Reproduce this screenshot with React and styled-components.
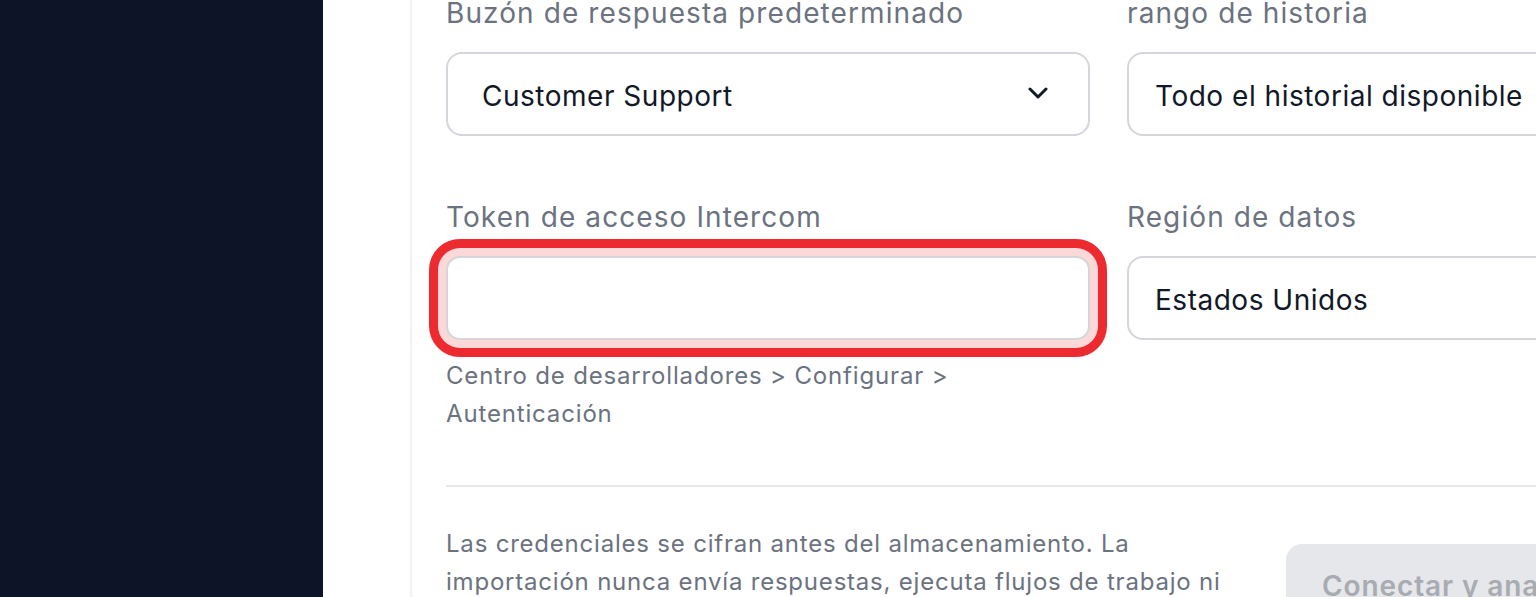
import React from "react";
import styled, { createGlobalStyle } from "styled-components";

const GlobalStyle = createGlobalStyle`
  html, body {
    margin: 0;
    padding: 0;
    background: #ffffff;
    overflow: hidden;
  }
  body {
    font-family: Inter, "Noto Sans", "Liberation Sans", sans-serif;
    letter-spacing: 0.032em;
  }
  * {
    box-sizing: border-box;
  }
`;

const Shell = styled.div`
  display: flex;
  width: 1536px;
  height: 597px;
  overflow: hidden;
`;

const Sidebar = styled.aside`
  width: 323px;
  flex-shrink: 0;
  background: #0e1427;
`;

const Main = styled.main`
  flex: 1;
  display: flex;
  padding-left: 87px;
  background: #ffffff;
  overflow: hidden;
`;

const Card = styled.section`
  flex-shrink: 0;
  width: 1400px;
  margin-top: -7px;
  padding: 0 36px 0 34px;
  border-left: 2px solid #f0f1f4;
`;

const Grid = styled.div`
  display: grid;
  grid-template-columns: 644px 644px;
  column-gap: 37px;
  row-gap: 61px;
  align-items: start;
`;

const Field = styled.div`
  display: flex;
  flex-direction: column;
`;

const Label = styled.label`
  font-size: 28px;
  line-height: 40px;
  letter-spacing: 0.039em;
  color: #6b7280;
  margin-bottom: 19px;
  white-space: nowrap;
`;

const Control = styled.div`
  position: relative;
  display: flex;
  align-items: center;
  height: 84px;
  padding: 4px 60px 0 ${(p) => p.$inset}px;
  border: 2px solid #d4d6db;
  border-radius: 16px;
  background: #ffffff;
  font-size: 28px;
  color: #111827;
  white-space: nowrap;
`;

const Chevron = styled.svg`
  position: absolute;
  right: 40px;
  top: 50%;
  margin-top: -7px;
`;

const TokenInput = styled.input`
  height: 84px;
  width: 100%;
  padding: 0 26px;
  border: 2px solid #d4d6db;
  border-radius: 14px;
  background: #ffffff;
  font: inherit;
  font-size: 28px;
  color: #111827;
  outline: none;
  box-shadow: 0 0 0 8px #fcd8d9, 0 0 0 17px #ec2a30;
`;

const Helper = styled.p`
  margin: 17px 0 0;
  font-size: 24px;
  line-height: 38px;
  letter-spacing: 0.035em;
  color: #6b7280;
`;

const Divider = styled.hr`
  margin: 52px 0 0;
  height: 2px;
  border: none;
  background: #e7e8ec;
`;

const Footer = styled.div`
  display: flex;
  align-items: center;
  gap: 48px;
  margin-top: 38px;
`;

const Note = styled.p`
  margin: 0;
  max-width: 792px;
  font-size: 24px;
  line-height: 38px;
  letter-spacing: 0.033em;
  color: #6b7280;
`;

const Button = styled.button`
  flex-shrink: 0;
  height: 84px;
  margin-top: 8px;
  padding: 0 36px;
  border: none;
  border-radius: 16px;
  background: #e6e7ea;
  color: #a8abb2;
  font-family: inherit;
  font-size: 28px;
  font-weight: 600;
  letter-spacing: 0.032em;
  cursor: not-allowed;
`;

const ChevronDown = () => (
  <Chevron width="20" height="12" viewBox="0 0 20 12" fill="none">
    <polyline
      points="2,2 10,10 18,2"
      stroke="#111827"
      strokeWidth="3"
      strokeLinecap="round"
      strokeLinejoin="round"
    />
  </Chevron>
);

const App = () => {
  return (
    <>
      <GlobalStyle />
      <Shell>
        <Sidebar />
        <Main>
          <Card>
            <Grid>
              <Field>
                <Label>Buzón de respuesta predeterminado</Label>
                <Control $inset={34}>
                  Customer Support
                  <ChevronDown />
                </Control>
              </Field>
              <Field>
                <Label>rango de historia</Label>
                <Control $inset={26}>
                  Todo el historial disponible
                  <ChevronDown />
                </Control>
              </Field>
              <Field>
                <Label htmlFor="token">Token de acceso Intercom</Label>
                <TokenInput id="token" type="password" />
                <Helper>
                  Centro de desarrolladores &gt; Configurar &gt; Autenticación
                </Helper>
              </Field>
              <Field>
                <Label>Región de datos</Label>
                <Control $inset={26}>
                  Estados Unidos
                  <ChevronDown />
                </Control>
              </Field>
            </Grid>
            <Divider />
            <Footer>
              <Note>
                Las credenciales se cifran antes del almacenamiento. La
                importación nunca envía respuestas, ejecuta flujos de trabajo ni
                modifica datos en Intercom.
              </Note>
              <Button disabled>Conectar y analizar</Button>
            </Footer>
          </Card>
        </Main>
      </Shell>
    </>
  );
};

export default App;
